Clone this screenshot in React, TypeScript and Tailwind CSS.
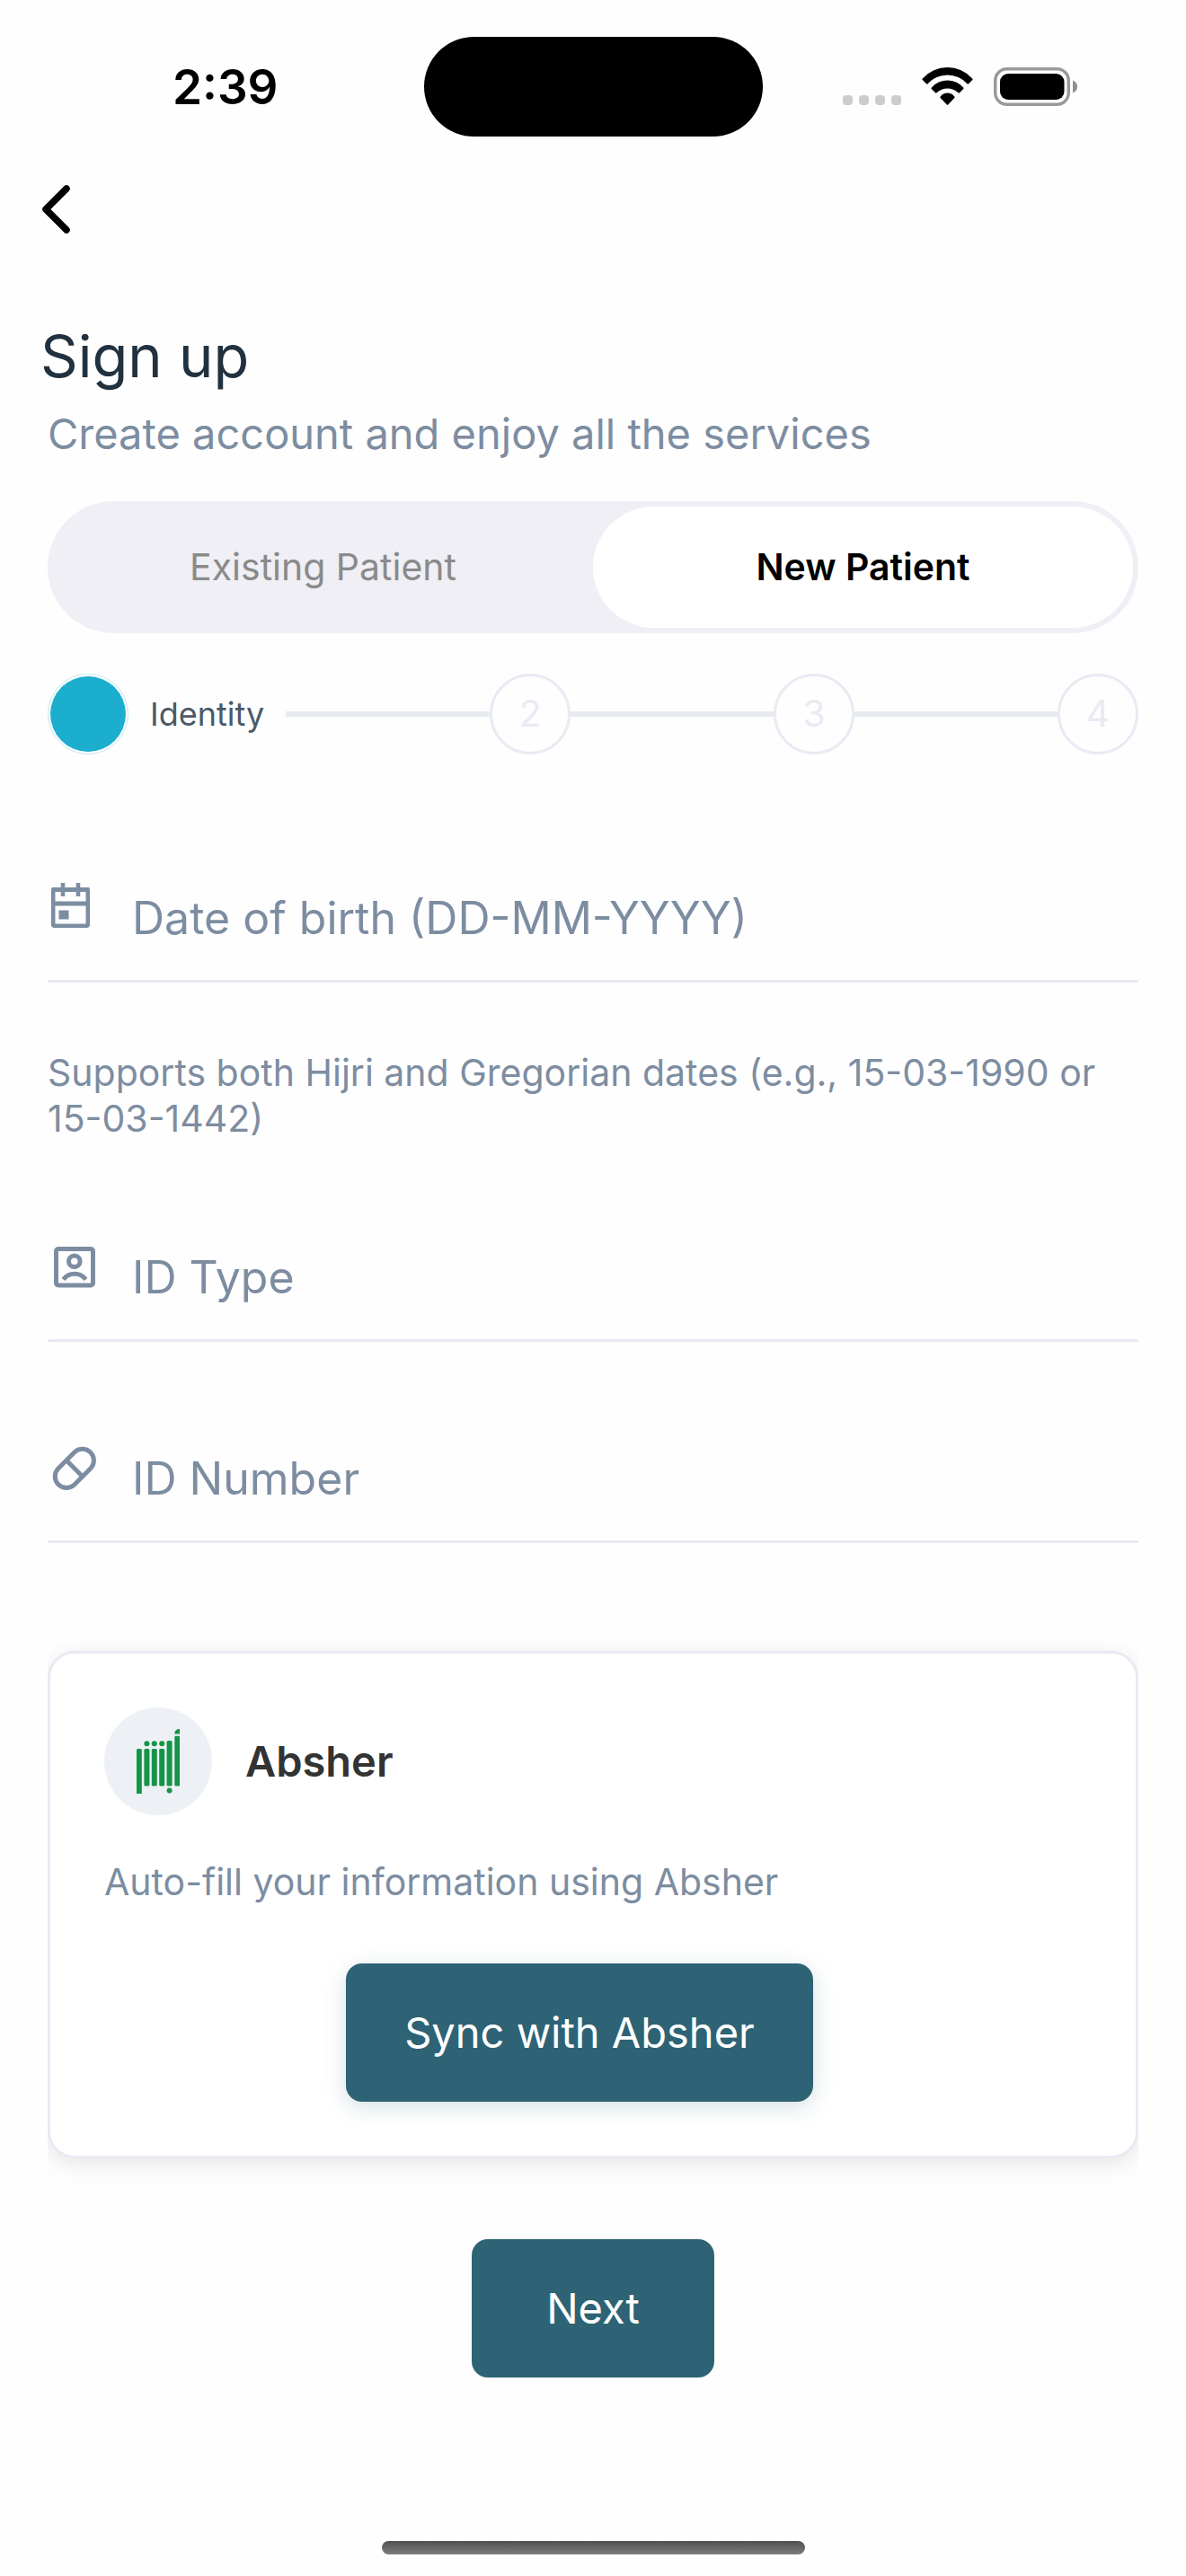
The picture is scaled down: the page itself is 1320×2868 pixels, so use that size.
import { useState } from 'react';
import type { ReactNode } from 'react';

const CalendarIcon = () => (
  <svg width="60" height="54" viewBox="0 0 60 54" fill="none" stroke="currentColor" aria-hidden="true">
    <rect x="6.2" y="9.2" width="38.6" height="40.6" rx="1.5" strokeWidth="4.5" />
    <path d="M4.5 9.5h42M4.5 25h42" strokeWidth="5" />
    <path d="M17 2v15M34 2v15" strokeWidth="4.5" />
    <rect x="12.5" y="32.5" width="11" height="10" fill="currentColor" stroke="none" />
  </svg>
);

const IdTypeIcon = () => (
  <svg width="60" height="54" viewBox="0 0 60 54" fill="none" stroke="currentColor" strokeWidth="5" aria-hidden="true">
    <rect x="9.5" y="9.5" width="41" height="40.5" rx="2.5" />
    <circle cx="29.8" cy="23.3" r="6.3" />
    <path d="M17.5 43.5a15.5 15.5 0 0 1 25 0" />
  </svg>
);

const IdNumberIcon = () => (
  <svg width="60" height="54" viewBox="0 0 60 54" fill="none" stroke="currentColor" strokeWidth="5" aria-hidden="true">
    <path d="M12 29.7 29.7 12a12.7 12.7 0 0 1 18 18L30 47.7a12.7 12.7 0 0 1-18-18Z" />
    <path d="m21 21 18 18" />
  </svg>
);

const AbsherLogo = () => (
  <svg width="48" height="72" viewBox="0 0 48 72" fill="#149447" aria-hidden="true">
    <path d="M0 23.5Q0 22 1.5 22h3q1.3 0 1.3 1.5V72H0z" />
    <rect x="8.4" y="22" width="6" height="41.5" rx="1.5" />
    <rect x="16.8" y="22" width="6" height="41.5" rx="1.5" />
    <rect x="25.2" y="22" width="6" height="41.5" rx="1.5" />
    <rect x="33.6" y="13" width="6" height="50.5" rx="1.5" />
    <path d="M42.3 9q0-1.3 1.3-1.3H48V63.5h-4.2q-1.5 0-1.5-1.5z" />
    <path d="M42.3 5.5Q42.3 0 48 0v5.5z" />
    <circle cx="11.4" cy="16.2" r="3" />
    <circle cx="19.8" cy="16.2" r="3" />
    <circle cx="28.2" cy="16.2" r="3" />
    <circle cx="36.6" cy="68.5" r="3" />
  </svg>
);

function StatusBar() {
  return (
    <header className="grid grid-cols-[1fr_377px_1fr] items-center pt-[41px]">
      <span className="pl-[30px] text-center text-[53px] leading-[64px] font-semibold text-black">2:39</span>
      <div className="h-[111px] rounded-full bg-black" />
      <div className="flex items-end justify-end pr-[121px]">
        <div className="mr-[23px] flex gap-[7px] pb-px">
          <span className="size-[11px] rounded-[4px] bg-[#cccccc]" />
          <span className="size-[11px] rounded-[4px] bg-[#cccccc]" />
          <span className="size-[11px] rounded-[4px] bg-[#cccccc]" />
          <span className="size-[11px] rounded-[4px] bg-[#cccccc]" />
        </div>
        <svg className="mr-[23px]" width="57" height="43" viewBox="0 0 57 43" fill="#000" aria-hidden="true">
          <path d="M.8 12.5A37 37 0 0 1 56.2 12.5q.8.7 0 1.5L52 18.3q-.7.7-1.5 0A29.6 29.6 0 0 0 6.5 18.3q-.8.7-1.5 0L.8 14q-.8-.8 0-1.5z" />
          <path d="M10.8 22.5A23.6 23.6 0 0 1 46.2 22.5q.8.8 0 1.5l-4.3 4.3q-.7.7-1.4 0A17.4 17.4 0 0 0 16.5 28.3q-.7.7-1.4 0L10.8 24q-.8-.7 0-1.5z" />
          <path d="M20.7 32.5A9.6 9.6 0 0 1 36.3 32.5q.8.8 0 1.5L29.2 41.5q-.7.7-1.4 0L20.7 34q-.8-.7 0-1.5z" />
        </svg>
        <svg width="93" height="43" viewBox="0 0 93 43" aria-hidden="true">
          <rect x="1.7" y="1.7" width="81.6" height="39.6" rx="13" fill="none" stroke="#999" strokeWidth="3.4" />
          <rect x="7" y="7" width="71.5" height="29" rx="9" fill="#000" />
          <path d="M88 14.5q5 2 5 7t-5 7z" fill="#8f8f8f" />
        </svg>
      </div>
    </header>
  );
}

function Field({ icon, children }: { icon: ReactNode; children: ReactNode }) {
  return (
    <label className="flex items-start border-b-[3px] border-[#e8eaf3] text-[#7d8da1]">
      <span className="mt-[21px] mr-[34px] shrink-0">{icon}</span>
      {children}
    </label>
  );
}

const fieldInput =
  'w-full min-w-0 flex-1 appearance-none bg-transparent pt-[30px] pb-[37px] h-[131px] text-[50px] leading-[64px] text-[#7d8da1] placeholder:text-[#7d8da1] placeholder:opacity-100 outline-none';

function Stepper() {
  return (
    <ol className="mt-[45px] flex items-center">
      <li className="flex flex-1 items-center">
        <span className="size-[90px] shrink-0 rounded-full border border-[#bfe8f1] bg-white p-[2px]">
          <span className="block size-full rounded-full bg-[#1caece]" />
        </span>
        <span className="mx-[24px] text-[36px] leading-[44px] text-[#4b5966]">Identity</span>
        <span className="h-[6px] flex-1 bg-[#e7eaef]" />
      </li>
      {['2', '3', '4'].map((step) => (
        <li key={step} className="flex items-center">
          {step !== '2' && <span className="h-[6px] w-[226px] bg-[#e7eaef]" />}
          <span className="flex size-[90px] items-center justify-center rounded-full border-[3px] border-[#e8ebf3] text-[41px] text-[#e8ebf3]">
            {step}
          </span>
        </li>
      ))}
    </ol>
  );
}

export default function App() {
  const [tab, setTab] = useState('new');
  const [dob, setDob] = useState('');
  const [idType, setIdType] = useState('');
  const [idNumber, setIdNumber] = useState('');

  const activeTab = 'bg-white font-semibold text-black';
  const idleTab = 'text-[#8a8a8a]';

  return (
    <div className="flex min-h-screen flex-col bg-[#fefefe] font-['Inter',sans-serif]">
      <StatusBar />

      <main className="flex-1 px-[53px]">
        <button type="button" aria-label="Back" className="mt-[54px] -ml-[6px] block">
          <svg width="31" height="54" viewBox="0 0 31 54" fill="none" stroke="#000" strokeWidth="7.5" strokeLinecap="round" strokeLinejoin="round" aria-hidden="true">
            <path d="M27 4 4 27 27 50" />
          </svg>
        </button>

        <h1 className="mt-[97px] -ml-[8px] text-[65px] leading-[80px] text-[#21313f]">Sign up</h1>
        <p className="mt-[16px] text-[47px] leading-[60px] text-[#7d8da1]">Create account and enjoy all the services</p>

        {/* Patient type */}
        <div role="tablist" className="mt-[45px] grid h-[147px] grid-cols-2 rounded-full bg-[#f0eff5] p-[6px]">
          <button
            type="button"
            role="tab"
            aria-selected={tab === 'existing'}
            onClick={() => setTab('existing')}
            className={`rounded-full text-[41px] ${tab === 'existing' ? activeTab : idleTab}`}
          >
            Existing Patient
          </button>
          <button
            type="button"
            role="tab"
            aria-selected={tab === 'new'}
            onClick={() => setTab('new')}
            className={`rounded-full text-[41px] ${tab === 'new' ? activeTab : idleTab}`}
          >
            New Patient
          </button>
        </div>

        <Stepper />

        <form className="mt-[120px] flex flex-col" onSubmit={(e) => e.preventDefault()}>
          <Field icon={<CalendarIcon />}>
            <input
              type="text"
              aria-label="Date of birth"
              placeholder="Date of birth (DD-MM-YYYY)"
              value={dob}
              onChange={(e) => setDob(e.target.value)}
              className={fieldInput}
            />
          </Field>
          <p className="mt-[75px] mb-[89px] text-[41px] leading-[51px] text-[#7d8da1]">
            Supports both Hijri and Gregorian dates (e.g., 15-03-1990 or 15-03-1442)
          </p>
          <Field icon={<IdTypeIcon />}>
            <select
              aria-label="ID Type"
              value={idType}
              onChange={(e) => setIdType(e.target.value)}
              className={fieldInput}
            >
              <option value="" disabled hidden>ID Type</option>
              <option value="national">National ID</option>
              <option value="iqama">Iqama</option>
            </select>
          </Field>
          <div className="mt-[90px]">
            <Field icon={<IdNumberIcon />}>
              <input
                type="text"
                aria-label="ID Number"
                placeholder="ID Number"
                value={idNumber}
                onChange={(e) => setIdNumber(e.target.value)}
                className={fieldInput}
              />
            </Field>
          </div>

          {/* Absher sync */}
          <div className="mt-[120px] overflow-x-clip">
            <section className="flex flex-col rounded-[30px] border-[3px] border-[#e8ebf3] bg-white p-[60px] shadow-[0_6px_24px_rgba(0,0,0,0.1)]">
              <div className="flex items-center gap-[37px]">
                <div className="flex size-[120px] items-center justify-center rounded-full bg-[#edf1f5]">
                  <AbsherLogo />
                </div>
                <h2 className="text-[47px] leading-[60px] font-semibold text-[#333333]">Absher</h2>
              </div>
              <p className="mt-[49px] text-[41px] leading-[51px] text-[#7d8da1]">
                Auto-fill your information using Absher
              </p>
              <button
                type="button"
                className="mt-[65px] mr-[30px] h-[154px] w-[520px] self-center rounded-[18px] bg-[#2e6375] text-[47px] text-white shadow-[0_6px_24px_rgba(46,99,117,0.2)]"
              >
                Sync with Absher
              </button>
            </section>
          </div>

          <button type="submit" className="mt-[90px] h-[154px] w-[270px] self-center rounded-[18px] bg-[#2e6375] text-[47px] text-white">
            Next
          </button>
        </form>
      </main>

      <div className="flex justify-center pb-[24px]">
        <div className="h-[15px] w-[471px] rounded-full bg-linear-to-b from-[#505050] to-[#7e7e7e]" />
      </div>
    </div>
  );
}
